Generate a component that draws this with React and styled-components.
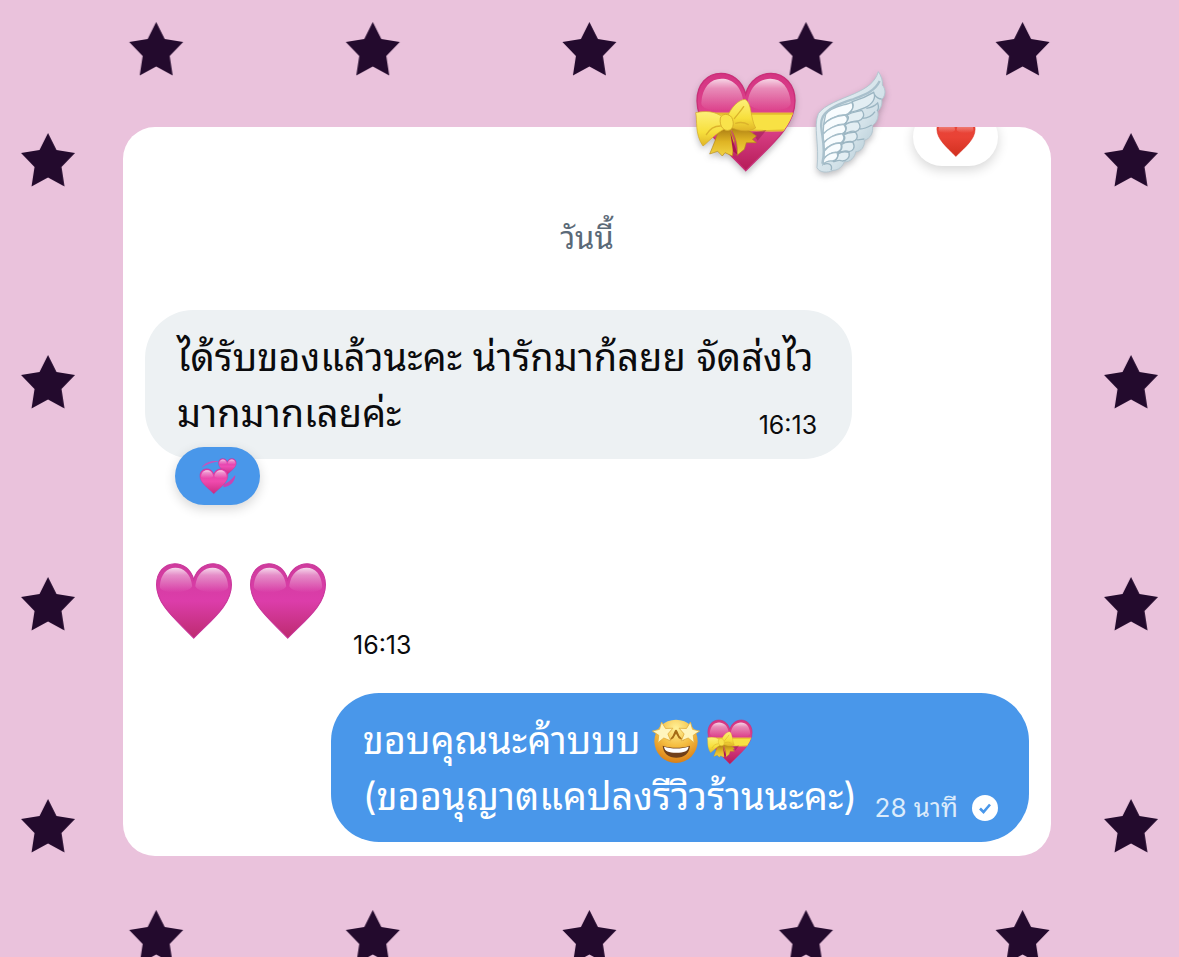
import React, { useId } from "react";
import styled, { createGlobalStyle } from "styled-components";

const GlobalStyle = createGlobalStyle`
  *, *::before, *::after { box-sizing: border-box; }
  body {
    margin: 0;
    background: #eac2dc;
    font-family: Inter, "Noto Sans Thai Looped", "Noto Looped Thai", Loma, Garuda, Umpush, Waree, sans-serif;
  }
`;

const Page = styled.div`
  position: relative;
  min-height: 100vh;
  padding: 127px 128px 101px 123px;
  overflow: hidden;
`;

const Backdrop = styled.svg`
  position: absolute;
  inset: 0;
  width: 100%;
  height: 100%;
`;

const Frame = styled.main`
  position: relative;
`;

const Card = styled.section`
  display: flex;
  flex-direction: column;
  padding: 0 22px 14px;
  border-radius: 32px;
  background: #fff;
  overflow: hidden;
`;

const Stickers = styled.div`
  position: absolute;
  top: -56px;
  right: 164px;
  display: flex;
  align-items: flex-start;
  gap: 18px;
`;

const Art = styled.svg`
  display: block;
  flex: none;
  width: ${(p) => p.$w}px;
  height: ${(p) => p.$h}px;
  overflow: visible;
  filter: ${(p) => (p.$lift ? "drop-shadow(0 3px 3px rgba(40, 40, 50, 0.3))" : "none")};
`;

const Reaction = styled.button`
  display: flex;
  align-items: center;
  justify-content: center;
  width: 85px;
  height: 58px;
  padding: 0;
  border: 0;
  border-radius: 29px;
  background: ${(p) => (p.$own ? "#4997ea" : "#fff")};
  box-shadow: 0 4px 12px rgba(0, 0, 0, 0.16);
`;

const ClippedReaction = styled(Reaction)`
  align-self: flex-end;
  margin: -19px 31px 0 0;
`;

const AttachedReaction = styled(Reaction)`
  position: absolute;
  left: 30px;
  bottom: -46px;
`;

const DayLabel = styled.h2`
  margin: 52px 0 52px;
  color: #5b6a78;
  font-size: 31px;
  font-weight: 400;
  line-height: 40px;
  text-align: center;
`;

const Bubble = styled.article`
  position: relative;
  display: flex;
  align-items: flex-end;
  justify-content: space-between;
  width: ${(p) => (p.$own ? 79 : 80)}%;
  align-self: ${(p) => (p.$own ? "flex-end" : "flex-start")};
  padding: 19px ${(p) => (p.$own ? 31 : 35)}px 18px 32px;
  border-radius: 48px;
  background: ${(p) => (p.$own ? "#4997ea" : "#edf1f3")};
  color: ${(p) => (p.$own ? "#fff" : "#0b0b0d")};
`;

const Text = styled.p`
  flex: 1;
  min-width: 0;
  margin: 0;
  font-size: 38px;
  line-height: 56px;
  white-space: nowrap;
`;

const InlineEmoji = styled.span`
  display: inline-flex;
  gap: 8px;
  margin-left: 2px;
  vertical-align: -9px;
`;

const Meta = styled.div`
  display: flex;
  align-items: center;
  gap: 14px;
  flex: none;
  width: 0;
  justify-content: flex-end;
  white-space: nowrap;
  font-size: ${(p) => (p.$own ? 26 : 25)}px;
  line-height: 32px;
  color: ${(p) => (p.$own ? "#dcebfb" : "#0b0b0d")};
`;

const EmojiMessage = styled.article`
  display: flex;
  align-items: flex-end;
  gap: 16px;
  height: 99px;
  margin: 103px 0 32px;
  padding-left: 10px;
`;

const HeartSlot = styled.span`
  align-self: flex-start;
`;

const EmojiTime = styled.time`
  margin-left: 10px;
  font-size: 25px;
  line-height: 32px;
  color: #0b0b0d;
`;

const HEART =
  "M152 66C140 22 108 4 78 4 36 4 6 38 6 86 6 165 82 222 152 296 224 222 300 165 300 86 300 38 268 4 228 4 198 4 164 22 152 66Z";
const GLOSS_LEFT = "M146 92C140 42 112 20 80 20 46 20 22 46 19 92 16 124 130 124 146 92Z";
const GLOSS_RIGHT = "M158 92C164 42 194 20 226 20 260 20 284 46 287 92 290 124 174 124 158 92Z";

function HeartBody({ id, top, mid, low, rim }) {
  return (
    <>
      <defs>
        <linearGradient id={id + "b"} x1="0" y1="0" x2="0" y2="1">
          <stop offset="0" stopColor={top} />
          <stop offset="0.5" stopColor={mid} />
          <stop offset="1" stopColor={low} />
        </linearGradient>
        <linearGradient id={id + "g"} x1="0" y1="0" x2="0" y2="1">
          <stop offset="0" stopColor="#fff" stopOpacity="0.8" />
          <stop offset="0.3" stopColor="#fff" stopOpacity="0.42" />
          <stop offset="1" stopColor="#fff" stopOpacity="0" />
        </linearGradient>
      </defs>
      <path d={HEART} fill={`url(#${id}b)`} stroke={rim} strokeWidth="4" />
      <path d={GLOSS_LEFT} fill={`url(#${id}g)`} />
      <path d={GLOSS_RIGHT} fill={`url(#${id}g)`} />
    </>
  );
}

function PinkHeart() {
  const id = useId();
  return (
    <Art viewBox="0 0 306 300" $w={78} $h={78} role="img" aria-label="pink heart">
      <HeartBody id={id} top="#cf3b9d" mid="#dc3daa" low="#bd2b6f" rim="#c9359a" />
    </Art>
  );
}

function RedHeart() {
  const id = useId();
  return (
    <Art viewBox="0 0 306 300" $w={40} $h={39} role="img" aria-label="red heart">
      <HeartBody id={id} top="#e8463c" mid="#e94235" low="#d1301f" rim="#d8392c" />
    </Art>
  );
}

function GiftHeart({ size, lift }) {
  const id = useId();
  return (
    <Art viewBox="0 0 306 300" $w={size} $h={size} $lift={lift} role="img" aria-label="heart with ribbon">
      <HeartBody id={id} top="#d43482" mid="#e0468f" low="#b51c58" rim="#c92f78" />
      <defs>
        <clipPath id={id + "c"}>
          <path d={HEART} />
        </clipPath>
        <linearGradient id={id + "y"} x1="0" y1="0" x2="0" y2="1">
          <stop offset="0" stopColor="#fdf07a" />
          <stop offset="0.6" stopColor="#f7df3c" />
          <stop offset="1" stopColor="#e0b528" />
        </linearGradient>
        <linearGradient id={id + "t"} x1="0" y1="0" x2="0" y2="1">
          <stop offset="0" stopColor="#a87912" />
          <stop offset="0.5" stopColor="#dfb424" />
          <stop offset="1" stopColor="#f2d444" />
        </linearGradient>
      </defs>
      <g clipPath={`url(#${id}c)`}>
        <path d="M0 122H306V174Q240 182 170 176L0 172Z" fill="#f8e144" />
        <path d="M0 122H306V128H0ZM160 172Q240 178 306 168V178H160Z" fill="#e3bb2e" />
        <path d="M172 182L214 174 188 206Z" fill="#8f1448" opacity="0.45" />
      </g>
      <path d="M74 166C66 194 54 222 44 246L68 238 82 252 90 242 112 252 118 206 104 168Z" fill={`url(#${id}t)`} stroke="#b58a19" strokeWidth="2" />
      <path d="M106 168C122 192 130 222 126 250L148 232 154 212 184 212 172 202 184 192 138 160Z" fill={`url(#${id}t)`} stroke="#b58a19" strokeWidth="2" />
      <path d="M106 182L128 248 114 238Z" fill="#a9154f" />
      <path d="M84 136C58 116 30 116 2 122 8 146 -2 184 24 222 42 208 62 184 90 170Z" fill={`url(#${id}y)`} stroke="#d3a728" strokeWidth="2" />
      <path d="M96 136C110 104 130 84 150 82 172 94 164 134 182 168 160 182 132 176 104 166Z" fill={`url(#${id}y)`} stroke="#d3a728" strokeWidth="2" />
      <path d="M76 162C56 162 42 174 34 188M118 140C130 124 138 116 146 104M122 154C140 148 150 152 160 158" fill="none" stroke="#dcb32c" strokeWidth="4" strokeLinecap="round" />
      <path d="M76 138C80 124 102 124 110 136 118 152 116 168 104 174 88 180 72 164 76 138Z" fill="#f9e34b" stroke="#d9b02c" strokeWidth="3" />
    </Art>
  );
}

function Wing() {
  const id = useId();
  return (
    <Art viewBox="408 30 216 306" $w={72} $h={102} $lift role="img" aria-label="wing">
      <defs>
        <linearGradient id={id + "w"} x1="0" y1="0" x2="1" y2="1">
          <stop offset="0" stopColor="#eef5f8" />
          <stop offset="0.6" stopColor="#d3e2e9" />
          <stop offset="1" stopColor="#9fbbc8" />
        </linearGradient>
      </defs>
      <path
        d="M598 32C588 64 566 80 526 98 484 116 436 132 418 158 402 198 422 250 414 320 422 336 446 336 462 328 480 328 492 314 496 302 514 304 528 288 530 272 546 272 558 256 556 238 574 232 584 216 580 194 594 184 600 168 596 150 608 140 610 126 608 116 622 102 620 84 610 72 612 58 606 44 598 32Z"
        fill={`url(#${id}w)`}
        stroke="#b4c7d1"
        strokeWidth="3"
      />
      <g fill="#f8fcfe" stroke="#a3bcc8" strokeWidth="4">
        <path d="M440 160C456 136 496 134 518 124 528 140 518 156 498 162 474 160 450 176 434 190Z" />
        <path d="M434 192C450 168 482 164 498 162 512 174 504 186 494 190 470 188 450 206 432 218Z" />
        <path d="M432 220C450 196 478 192 494 190 506 206 498 214 490 218 468 216 450 232 434 244Z" />
        <path d="M434 246C452 224 474 220 490 218 500 232 492 242 484 246 464 244 448 256 436 268Z" />
        <path d="M436 270C452 250 470 246 484 246 492 262 484 270 474 274 458 272 446 282 434 292Z" />
        <path d="M434 294C446 278 464 274 474 274 480 290 472 298 460 300 450 298 440 302 432 310Z" />
      </g>
      <path
        d="M430 308C446 240 414 200 432 166 450 138 490 126 524 114 560 100 588 90 602 60"
        fill="none"
        stroke="#a9c0cc"
        strokeWidth="7"
      />
      <g fill="#e3eef3" stroke="#9bb5c2" strokeWidth="4">
        <path d="M520 122C548 114 564 106 584 94 592 112 580 130 558 140 540 148 526 152 510 156 522 146 526 136 520 122Z" />
        <path d="M504 162C520 152 534 152 548 148 562 164 548 178 538 180 520 178 510 188 498 188 508 178 512 170 504 162Z" />
        <path d="M498 192C512 182 524 182 536 182 550 198 540 208 530 212 516 206 506 218 494 218 502 210 504 200 498 192Z" />
        <path d="M494 222C508 212 520 214 530 214 540 228 532 240 520 242 508 238 498 246 488 246 498 238 500 230 494 222Z" />
        <path d="M488 250C502 240 512 244 522 244 530 260 522 270 510 272 498 266 488 274 478 274 488 268 490 258 488 250Z" />
        <path d="M478 278C490 270 502 272 510 274 514 290 502 300 490 300 478 294 470 302 462 302 474 296 478 288 478 278Z" />
      </g>
      <path
        d="M586 100C594 112 602 114 608 114M562 142C576 140 588 134 596 126 600 138 600 144 594 150M550 172C566 172 580 164 588 152M542 204C556 204 568 198 578 192M532 236C542 238 548 234 556 234M434 310C450 304 462 312 456 328"
        fill="none"
        stroke="#9bb5c2"
        strokeWidth="4"
      />
    </Art>
  );
}

function RevolvingHearts() {
  const id = useId();
  return (
    <Art viewBox="100 60 112 106" $w={38} $h={36} role="img" aria-label="revolving hearts">
      <path d="M108 88C118 73 136 66 158 70 140 72 124 77 108 88Z" fill="#c453bd" />
      <path d="M172 138C184 134 196 124 207 110 206 130 192 144 172 146Z" fill="#c843b4" />
      <g transform="translate(156 61) scale(.18 .16)">
        <HeartBody id={id + "s"} top="#d936a8" mid="#ed4db5" low="#c82c85" rim="#b92582" />
      </g>
      <g transform="translate(101 91) scale(.28 .25)">
        <HeartBody id={id + "l"} top="#dc3ba8" mid="#f04bae" low="#ca2a82" rim="#c92a92" />
      </g>
    </Art>
  );
}

const EYE = "M0-27L8-9 27-7 12 6 17 25 0 15-17 25-12 6-27-7-8-9Z";

function StarStruck() {
  const id = useId();
  return (
    <Art viewBox="45 114 138 132" $w={46} $h={44} role="img" aria-label="star-struck face">
      <defs>
        <radialGradient id={id + "f"} cx="0.5" cy="0.2" r="0.82">
          <stop offset="0" stopColor="#fff29a" />
          <stop offset="0.5" stopColor="#f5bd40" />
          <stop offset="1" stopColor="#d97c14" />
        </radialGradient>
      </defs>
      <circle cx="114" cy="181" r="65" fill={`url(#${id}f)`} />
      <path d="M74 194C98 202 132 202 156 194 154 218 138 230 115 230S76 218 74 194Z" fill="#70401a" />
      <path d="M78 197C100 204 130 204 152 197 150 211 138 215 115 215S80 211 78 197Z" fill="#fff" />
      <path d="M92 180L104 164 110 150Q114 142 118 150L124 164 138 180 122 172 114 158 106 172Z" fill="#a66c16" />
      <g fill="#fff5bd" stroke="#e0ad3c" strokeWidth="2" strokeLinejoin="round">
        <path d={EYE} transform="translate(75 154) rotate(-8) scale(1.15)" />
        <path d={EYE} transform="translate(153 154) rotate(8) scale(1.15)" />
      </g>
    </Art>
  );
}

function SeenCheck() {
  return (
    <Art viewBox="0 0 26 26" $w={26} $h={26} role="img" aria-label="อ่านแล้ว">
      <circle cx="13" cy="13" r="13" fill="#fff" />
      <path d="M8 13.5L11.5 17 18 9.5" fill="none" stroke="#4997ea" strokeWidth="2.6" />
    </Art>
  );
}

const STAR = "M0-28L8.5-11 27-8 13.5 6 16.5 25.5 0 16.5-16.5 25.5-13.5 6-27-8-8.5-11Z";

function StarBackdrop() {
  const id = useId();
  return (
    <Backdrop aria-hidden="true">
      <defs>
        <pattern id={id} width="216.6" height="222" patternUnits="userSpaceOnUse">
          <path d={STAR} transform="translate(156.2 50)" fill="#230a2d" />
          <path d={STAR} transform="translate(48 161)" fill="#230a2d" />
        </pattern>
      </defs>
      <rect width="100%" height="100%" fill={`url(#${id})`} />
    </Backdrop>
  );
}

export default function App() {
  return (
    <>
      <GlobalStyle />
      <Page lang="th">
        <StarBackdrop />
        <Frame>
          <Card>
            <ClippedReaction type="button">
              <RedHeart />
            </ClippedReaction>
            <DayLabel>วันนี้</DayLabel>
            <Bubble>
              <Text>
                ได้รับของแล้วนะคะ น่ารักมาก้ลยย จัดส่งไว
                <br />
                มากมากเลยค่ะ
              </Text>
              <Meta>
                <time>16:13</time>
              </Meta>
              <AttachedReaction type="button" $own>
                <RevolvingHearts />
              </AttachedReaction>
            </Bubble>
            <EmojiMessage>
              <HeartSlot><PinkHeart /></HeartSlot>
              <HeartSlot><PinkHeart /></HeartSlot>
              <EmojiTime>16:13</EmojiTime>
            </EmojiMessage>
            <Bubble $own>
              <Text>
                ขอบคุณนะค้าบบบ{" "}
                <InlineEmoji>
                  <StarStruck />
                  <GiftHeart size={46} />
                </InlineEmoji>
                <br />
                (ขออนุญาตแคปลงรีวิวร้านนะคะ)
              </Text>
              <Meta $own>
                <time>28 นาที</time>
                <SeenCheck />
              </Meta>
            </Bubble>
          </Card>
          <Stickers>
            <GiftHeart size={102} lift />
            <Wing />
          </Stickers>
        </Frame>
      </Page>
    </>
  );
}
